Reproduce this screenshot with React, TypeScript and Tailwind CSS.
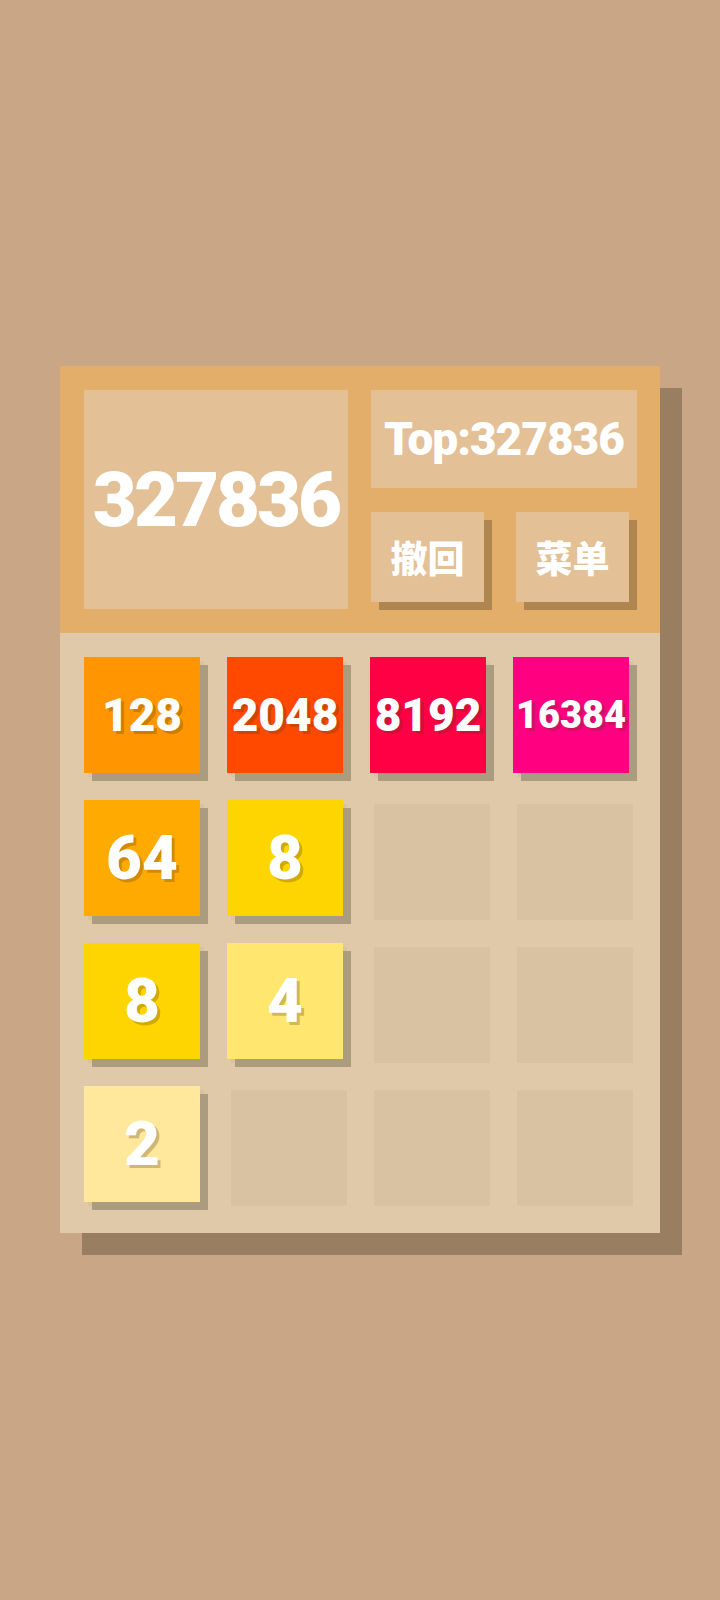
import React from "react";

type Tile = { v: number; bg: string } | null;

const font = { fontFamily: "Roboto, Lato, 'Noto Sans', 'Noto Sans CJK SC', sans-serif" };

const rows: Tile[][] = [
  [
    { v: 128, bg: "bg-[#ff9500]" },
    { v: 2048, bg: "bg-[#ff4800]" },
    { v: 8192, bg: "bg-[#ff0044]" },
    { v: 16384, bg: "bg-[#ff0080]" },
  ],
  [{ v: 64, bg: "bg-[#ffaa00]" }, { v: 8, bg: "bg-[#ffd500]" }, null, null],
  [{ v: 8, bg: "bg-[#ffd500]" }, { v: 4, bg: "bg-[#ffe66e]" }, null, null],
  [{ v: 2, bg: "bg-[#ffe79c]" }, null, null, null],
];

function sizeFor(v: number) {
  const n = String(v).length;
  if (n <= 2) return "text-[62px]";
  if (n <= 4) return "text-[46px]";
  return "text-[38px]";
}

export default function App() {
  return (
    <div className="min-h-[1600px] w-full bg-[#c9a686] pt-[366px]" style={font}>
      <div className="mx-auto w-[600px] shadow-[22px_22px_0_#9a7e62]">
        <div className="flex h-[267px] gap-[23px] bg-[#e2ae6a] pl-6 pt-6">
          <div className="flex h-[219px] w-[264px] items-center justify-center bg-[#e3c096]">
            <span className="text-[76px] font-black leading-none tracking-[-3px] text-white">327836</span>
          </div>
          <div className="flex w-[266px] flex-col">
            <div className="flex h-[98px] items-center justify-center bg-[#e3c096]">
              <span className="text-[46px] font-black leading-none tracking-[-1px] text-white">Top:327836</span>
            </div>
            <div className="mt-6 flex justify-between pr-2">
              <button className="flex h-[90px] w-[113px] items-center justify-center bg-[#e3c096] shadow-[8px_8px_0_#b08650]">
                <span className="text-[37px] font-black leading-none text-white" style={{ fontFamily: "'Noto Sans CJK SC', sans-serif" }}>撤回</span>
              </button>
              <button className="flex h-[90px] w-[113px] items-center justify-center bg-[#e3c096] shadow-[8px_8px_0_#b08650]">
                <span className="text-[37px] font-black leading-none text-white" style={{ fontFamily: "'Noto Sans CJK SC', sans-serif" }}>菜单</span>
              </button>
            </div>
          </div>
        </div>
        <div className="h-[600px] bg-[#dfc9a8] pl-7 pt-7">
          <div className="grid grid-cols-[repeat(4,116px)] grid-rows-[repeat(4,116px)] gap-[27px]">
            {rows.flat().map((t, i) => (
              <div key={i} className="bg-[#d8c2a2]">
                {t && (
                  <div
                    className={`flex h-full w-full -translate-x-1 -translate-y-1 items-center justify-center shadow-[8px_8px_0_#ab9b7f] ${t.bg}`}
                  >
                    <span
                      className={`font-black leading-none text-white [text-shadow:3px_3px_0_rgba(90,60,20,0.28)] ${sizeFor(t.v)}`}
                    >
                      {t.v}
                    </span>
                  </div>
                )}
              </div>
            ))}
          </div>
        </div>
      </div>
    </div>
  );
}
